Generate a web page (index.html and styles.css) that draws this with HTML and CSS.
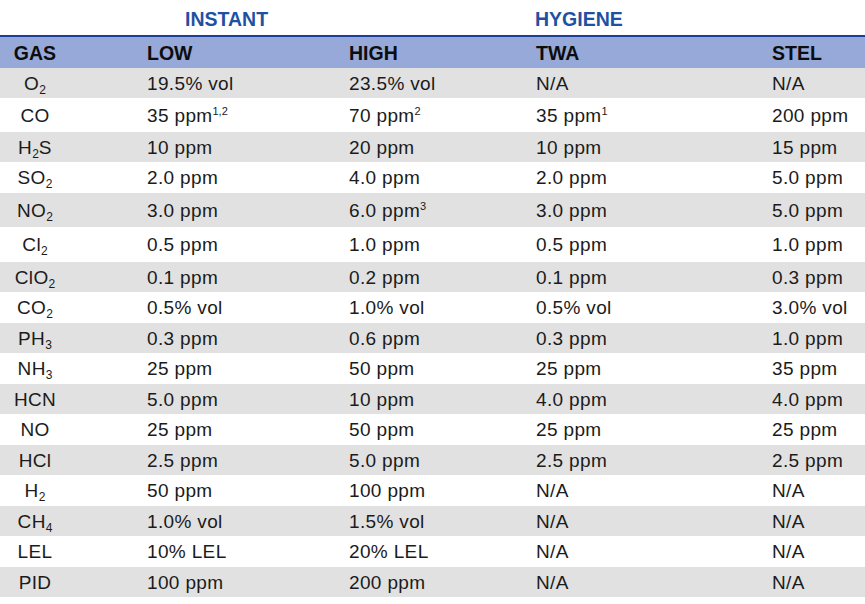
FILE: index.html
```html
<!DOCTYPE html>
<html lang="en">
<head>
<meta charset="utf-8">
<title>Gas alarm set points</title>
<link rel="stylesheet" href="styles.css">
</head>
<body>
<div class="table">
  <div class="row title">
    <div class="cell"></div>
    <div class="cell instant">INSTANT</div>
    <div class="cell"></div>
    <div class="cell hygiene">HYGIENE</div>
    <div class="cell"></div>
  </div>
  <div class="row head">
    <div class="cell gas">GAS</div>
    <div class="cell val">LOW</div>
    <div class="cell val">HIGH</div>
    <div class="cell val">TWA</div>
    <div class="cell val">STEL</div>
  </div>
  <div class="row odd h30">
    <div class="cell gas">O<sub>2</sub></div>
    <div class="cell val">19.5% vol</div>
    <div class="cell val">23.5% vol</div>
    <div class="cell val">N/A</div>
    <div class="cell val">N/A</div>
  </div>
  <div class="row h34">
    <div class="cell gas">CO</div>
    <div class="cell val">35 ppm<sup>1,2</sup></div>
    <div class="cell val">70 ppm<sup>2</sup></div>
    <div class="cell val">35 ppm<sup>1</sup></div>
    <div class="cell val">200 ppm</div>
  </div>
  <div class="row odd h30">
    <div class="cell gas">H<sub>2</sub>S</div>
    <div class="cell val">10 ppm</div>
    <div class="cell val">20 ppm</div>
    <div class="cell val">10 ppm</div>
    <div class="cell val">15 ppm</div>
  </div>
  <div class="row h31">
    <div class="cell gas">SO<sub>2</sub></div>
    <div class="cell val">2.0 ppm</div>
    <div class="cell val">4.0 ppm</div>
    <div class="cell val">2.0 ppm</div>
    <div class="cell val">5.0 ppm</div>
  </div>
  <div class="row odd h34">
    <div class="cell gas">NO<sub>2</sub></div>
    <div class="cell val">3.0 ppm</div>
    <div class="cell val">6.0 ppm<sup>3</sup></div>
    <div class="cell val">3.0 ppm</div>
    <div class="cell val">5.0 ppm</div>
  </div>
  <div class="row h35">
    <div class="cell gas">Cl<sub>2</sub></div>
    <div class="cell val">0.5 ppm</div>
    <div class="cell val">1.0 ppm</div>
    <div class="cell val">0.5 ppm</div>
    <div class="cell val">1.0 ppm</div>
  </div>
  <div class="row odd h30">
    <div class="cell gas">ClO<sub>2</sub></div>
    <div class="cell val">0.1 ppm</div>
    <div class="cell val">0.2 ppm</div>
    <div class="cell val">0.1 ppm</div>
    <div class="cell val">0.3 ppm</div>
  </div>
  <div class="row h31">
    <div class="cell gas">CO<sub>2</sub></div>
    <div class="cell val">0.5% vol</div>
    <div class="cell val">1.0% vol</div>
    <div class="cell val">0.5% vol</div>
    <div class="cell val">3.0% vol</div>
  </div>
  <div class="row odd h30">
    <div class="cell gas">PH<sub>3</sub></div>
    <div class="cell val">0.3 ppm</div>
    <div class="cell val">0.6 ppm</div>
    <div class="cell val">0.3 ppm</div>
    <div class="cell val">1.0 ppm</div>
  </div>
  <div class="row h31">
    <div class="cell gas">NH<sub>3</sub></div>
    <div class="cell val">25 ppm</div>
    <div class="cell val">50 ppm</div>
    <div class="cell val">25 ppm</div>
    <div class="cell val">35 ppm</div>
  </div>
  <div class="row odd h30">
    <div class="cell gas">HCN</div>
    <div class="cell val">5.0 ppm</div>
    <div class="cell val">10 ppm</div>
    <div class="cell val">4.0 ppm</div>
    <div class="cell val">4.0 ppm</div>
  </div>
  <div class="row h31">
    <div class="cell gas">NO</div>
    <div class="cell val">25 ppm</div>
    <div class="cell val">50 ppm</div>
    <div class="cell val">25 ppm</div>
    <div class="cell val">25 ppm</div>
  </div>
  <div class="row odd h30">
    <div class="cell gas">HCl</div>
    <div class="cell val">2.5 ppm</div>
    <div class="cell val">5.0 ppm</div>
    <div class="cell val">2.5 ppm</div>
    <div class="cell val">2.5 ppm</div>
  </div>
  <div class="row h31">
    <div class="cell gas">H<sub>2</sub></div>
    <div class="cell val">50 ppm</div>
    <div class="cell val">100 ppm</div>
    <div class="cell val">N/A</div>
    <div class="cell val">N/A</div>
  </div>
  <div class="row odd h30">
    <div class="cell gas">CH<sub>4</sub></div>
    <div class="cell val">1.0% vol</div>
    <div class="cell val">1.5% vol</div>
    <div class="cell val">N/A</div>
    <div class="cell val">N/A</div>
  </div>
  <div class="row h31">
    <div class="cell gas">LEL</div>
    <div class="cell val">10% LEL</div>
    <div class="cell val">20% LEL</div>
    <div class="cell val">N/A</div>
    <div class="cell val">N/A</div>
  </div>
  <div class="row odd h30">
    <div class="cell gas">PID</div>
    <div class="cell val">100 ppm</div>
    <div class="cell val">200 ppm</div>
    <div class="cell val">N/A</div>
    <div class="cell val">N/A</div>
  </div>
</div>
</body>
</html>
```

FILE: styles.css
```css
* { box-sizing: border-box; }

html, body {
  margin: 0;
  padding: 0;
  background: #ffffff;
}

body {
  font-family: "Liberation Sans", Arial, sans-serif;
  font-size: 19px;
  color: #1b1b1b;
  width: 865px;
}

.table {
  display: flex;
  flex-direction: column;
}

.row {
  display: grid;
  grid-template-columns: 138px 202px 187px 236px 102px;
  align-items: center;
  background: #ffffff;
}

.cell {
  white-space: nowrap;
  line-height: 1;
  letter-spacing: 0.35px;
}

.gas {
  text-align: center;
  padding-right: 68px;
  padding-left: 0;
}

.val {
  padding-left: 9px;
}

.title {
  height: 37px;
  border-bottom: 2px solid #1c3f95;
  align-items: center;
}

.title .cell {
  font-weight: bold;
  font-size: 19.5px;
  color: #1f51a3;
  letter-spacing: 0;
  padding-top: 4px;
}

.instant {
  padding-left: 47px;
}

.hygiene {
  padding-left: 8px;
}

.head {
  height: 31px;
  background: #96a9d9;
}

.head .cell {
  font-weight: bold;
  font-size: 19.5px;
  color: #0d0d0d;
  letter-spacing: 0;
  padding-top: 2px;
}

.odd {
  background: #e1e1e1;
}

.h30 { height: 30px; }
.h31 { height: 31px; }
.h34 { height: 34px; }
.h35 { height: 35px; }

sub {
  font-size: 12px;
  vertical-align: -4px;
  line-height: 0;
  letter-spacing: 0;
}

sup {
  font-size: 11px;
  vertical-align: 7px;
  line-height: 0;
  letter-spacing: 0;
}
```
